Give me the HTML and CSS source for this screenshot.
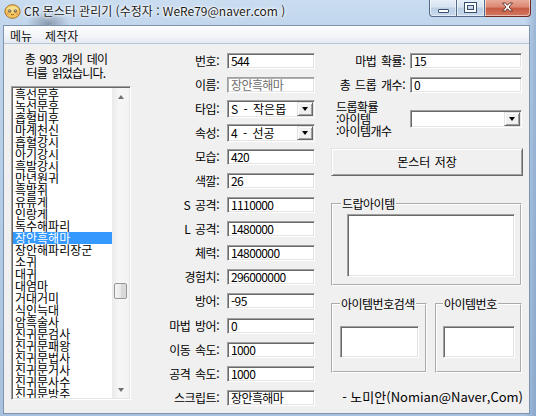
FILE: index.html
```html
<!DOCTYPE html>
<html lang="ko">
<head>
<meta charset="utf-8">
<title>CR 몬스터 관리기</title>
<link rel="stylesheet" href="styles.css">
</head>
<body>
<div class="window">
  <div class="titlebar">
    <svg class="app-icon" viewBox="0 0 17 16" width="17" height="16">
      <ellipse cx="8.5" cy="8.5" rx="7.6" ry="6.8" fill="#f2c65a" stroke="#a8742a" stroke-width="1"/>
      <ellipse cx="8.5" cy="6.5" rx="5.5" ry="3.2" fill="#f8e08e"/>
      <circle cx="5.6" cy="8" r="1.4" fill="#fff" stroke="#5a3a1a" stroke-width="0.7"/>
      <circle cx="11.4" cy="8" r="1.4" fill="#fff" stroke="#5a3a1a" stroke-width="0.7"/>
      <circle cx="5.8" cy="8.2" r="0.6" fill="#2a1a0a"/>
      <circle cx="11.2" cy="8.2" r="0.6" fill="#2a1a0a"/>
      <ellipse cx="3.6" cy="11" rx="1.3" ry="0.8" fill="#e98a6a"/>
      <ellipse cx="13.4" cy="11" rx="1.3" ry="0.8" fill="#e98a6a"/>
      <path d="M7 11.3 Q8.5 12.6 10 11.3" fill="none" stroke="#7a4a1a" stroke-width="0.8"/>
    </svg>
    <span class="title">CR 몬스터 관리기 (수정자 : WeRe79@naver.com )</span>
    <div class="caption">
      <div class="cbtn cmin"><span class="min-glyph"></span></div>
      <div class="cbtn cmax"><span class="max-glyph"></span></div>
      <div class="cbtn cclose">
        <svg viewBox="0 0 13 10" width="13" height="10">
          <path d="M1.5 1 L4.5 1 L6.5 3.3 L8.5 1 L11.5 1 L8 5 L11.5 9 L8.5 9 L6.5 6.7 L4.5 9 L1.5 9 L5 5 Z" fill="#fff" stroke="#5a2a22" stroke-width="0.9" stroke-linejoin="round"/>
        </svg>
      </div>
    </div>
  </div>

  <div class="client">
    <div class="menubar">
      <span class="menu-item">메뉴</span>
      <span class="menu-item">제작자</span>
    </div>

    <div class="content">
      <div class="left">
        <div class="count">총 903 개의 데이<br>터를 읽었습니다.</div>
        <div class="listbox">
          <ul class="items">
            <li>흑선문후</li>
            <li>녹선문후</li>
            <li>흡혈비후</li>
            <li>마계천신</li>
            <li>흡혈강시</li>
            <li>아기강시</li>
            <li>흑발강시</li>
            <li>만년원귀</li>
            <li>흑발쥐</li>
            <li>유류게</li>
            <li>인랑게</li>
            <li>독수해파리</li>
            <li class="sel">장안흑해마</li>
            <li>장안해파리장군</li>
            <li>소귀</li>
            <li>대귀</li>
            <li>대염마</li>
            <li>거대거미</li>
            <li>식인늑대</li>
            <li>암흑술사</li>
            <li>진귀문검사</li>
            <li>진귀문패왕</li>
            <li>진귀문법사</li>
            <li>진귀문거사</li>
            <li>진귀문사수</li>
            <li>진귀문방주</li>
          </ul>
          <div class="vscroll">
            <div class="arrow"><span class="tri-up"></span></div>
            <div class="track"><div class="thumb"></div></div>
            <div class="arrow"><span class="tri-down"></span></div>
          </div>
        </div>
      </div>

      <div class="mid">
        <span class="lbl">번호:</span><div class="tb">544</div>
        <span class="lbl">이름:</span><div class="tb ro">장안흑해마</div>
        <span class="lbl">타입:</span><div class="combo"><span class="val">S - 작은몹</span><span class="dd"><span class="tri-down black"></span></span></div>
        <span class="lbl">속성:</span><div class="combo"><span class="val">4 - 선공</span><span class="dd"><span class="tri-down black"></span></span></div>
        <span class="lbl">모습:</span><div class="tb">420</div>
        <span class="lbl">색깔:</span><div class="tb">26</div>
        <span class="lbl">S 공격:</span><div class="tb">1110000</div>
        <span class="lbl">L 공격:</span><div class="tb">1480000</div>
        <span class="lbl">체력:</span><div class="tb">14800000</div>
        <span class="lbl">경험치:</span><div class="tb">296000000</div>
        <span class="lbl">방어:</span><div class="tb">-95</div>
        <span class="lbl">마법 방어:</span><div class="tb">0</div>
        <span class="lbl">이동 속도:</span><div class="tb">1000</div>
        <span class="lbl">공격 속도:</span><div class="tb">1000</div>
        <span class="lbl">스크립트:</span><div class="tb">장안흑해마</div>
      </div>

      <div class="right">
        <div class="rgrid">
          <span class="lbl">마법 확률:</span><div class="tb">15</div>
          <span class="lbl">총 드롭 개수:</span><div class="tb">0</div>
        </div>
        <div class="droprow">
          <div class="droplbl">드롭확률<br>:아이템<br>:아이템개수</div>
          <div class="combo wide"><span class="val"></span><span class="dd"><span class="tri-down black"></span></span></div>
        </div>
        <div class="savebtn">몬스터 저장</div>
        <fieldset class="group drop">
          <legend>드랍아이템</legend>
          <div class="area drop-area"></div>
        </fieldset>
        <div class="grouprow">
          <fieldset class="group search">
            <legend>아이템번호검색</legend>
            <div class="area small-area"></div>
          </fieldset>
          <fieldset class="group itemno">
            <legend>아이템번호</legend>
            <div class="area small-area"></div>
          </fieldset>
        </div>
        <div class="footer">- 노미안(Nomian@Naver,Com)</div>
      </div>
    </div>
  </div>
</div>
</body>
</html>
```

FILE: styles.css
```css
html, body {
  margin: 0;
  padding: 0;
}

body {
  width: 536px;
  height: 416px;
  overflow: hidden;
  font-family: "Liberation Sans", "Noto Sans CJK KR", sans-serif;
  font-size: 12px;
  color: #000;
  background:
    radial-gradient(ellipse 22px 14px at 48px 24px, rgba(70, 80, 95, 0.45), rgba(70, 80, 95, 0) 100%),
    linear-gradient(90deg, rgba(255,255,255,0) 0, rgba(255,255,255,0) 525px, rgba(80,120,170,0.35) 536px),
    linear-gradient(180deg, #c9dcf0 0, #c0d5ec 30px, #b4cce6 200px, #a7c1de 416px);
}

.window {
  display: flex;
  flex-direction: column;
  height: 416px;
}

/* ---------- title bar ---------- */
.titlebar {
  height: 25px;
  flex: none;
  display: flex;
  align-items: flex-start;
}

.app-icon {
  margin: 3px 0 0 4px;
  flex: none;
}

.title {
  margin: 2px 0 0 3px;
  line-height: 17px;
  font-family: "Noto Sans CJK KR", "Liberation Sans", sans-serif;
  font-size: 12px;
  color: #1c1c1c;
  white-space: nowrap;
  text-shadow: 0 0 5px #fff, 0 0 3px #fff, 0 0 2px #fff;
}

.caption {
  margin-left: auto;
  margin-right: 5px;
  display: flex;
  flex: none;
}

.cbtn {
  height: 17px;
  box-sizing: border-box;
  border: 1px solid #536b8a;
  border-top: none;
  display: flex;
  align-items: center;
  justify-content: center;
  box-shadow: inset 1px 0 rgba(255,255,255,0.6), inset -1px -1px rgba(255,255,255,0.5);
}

.cmin {
  width: 28px;
  border-bottom-left-radius: 4px;
  background: linear-gradient(180deg, #e6eef8 0, #d6e2f0 45%, #bccfe5 50%, #c8d9ec 100%);
}

.cmax {
  width: 28px;
  border-left: none;
  background: linear-gradient(180deg, #e6eef8 0, #d6e2f0 45%, #bccfe5 50%, #c8d9ec 100%);
}

.cclose {
  width: 46px;
  border-left: none;
  border-bottom-right-radius: 4px;
  border-color: #6e2a20;
  background: linear-gradient(180deg, #e9a999 0, #d98772 45%, #c75a42 50%, #d27760 100%);
}

.min-glyph {
  width: 9px;
  height: 2px;
  margin-top: 6px;
  background: #fff;
  border: 1px solid #39506c;
  border-radius: 1px;
}

.max-glyph {
  width: 7px;
  height: 5px;
  margin-top: -2px;
  border: 2px solid #fff;
  border-top-width: 2px;
  box-shadow: 0 0 0 1px #39506c, inset 0 0 0 1px #39506c;
}

.cclose svg {
  margin-top: -2px;
}

/* ---------- client ---------- */
.client {
  flex: 1;
  margin: 0 6px 2px 3px;
  border: 1px solid #7d93ae;
  background: #f0f0f0;
  display: flex;
  flex-direction: column;
  font-family: "Noto Sans CJK KR", "Liberation Sans", sans-serif;
}

.menubar {
  height: 17px;
  flex: none;
  display: flex;
  gap: 13px;
  padding-left: 6px;
  border-bottom: 1px solid #b8c6d8;
  background: linear-gradient(180deg, #fdfdfe 0, #f2f5f9 60%, #e6ebf2 100%);
}

.menu-item {
  line-height: 19px;
  font-size: 12px;
  color: #101010;
}

.content {
  flex: 1;
  display: flex;
}

/* ---------- left ---------- */
.left {
  margin-left: 7px;
  width: 120px;
  flex: none;
  display: flex;
  flex-direction: column;
}

.count {
  margin-top: 8px;
  padding-right: 10px;
  line-height: 14px;
  text-align: center;
  letter-spacing: -0.8px;
  word-spacing: 2px;
  white-space: nowrap;
}

.listbox {
  margin-top: 6px;
  height: 314px;
  box-sizing: border-box;
  border: 1px solid;
  border-color: #a0a0a0 #fff #fff #a0a0a0;
  box-shadow: inset 1px 1px #696969, inset -1px -1px #e3e3e3;
  padding: 1px;
  background: #fff;
  display: flex;
}

.items {
  flex: 1;
  margin: 0;
  padding: 0;
  list-style: none;
  overflow: hidden;
  font-size: 12px;
  line-height: 12px;
}

.items li {
  height: 12px;
  padding-left: 2px;
  white-space: nowrap;
}

.items li.sel {
  background: #3399ff;
  color: #fff;
}

.vscroll {
  width: 17px;
  flex: none;
  display: flex;
  flex-direction: column;
  background: linear-gradient(90deg, #eaeaea 0, #f6f6f6 40%, #f3f3f3 100%);
}

.arrow {
  height: 17px;
  flex: none;
  display: flex;
  align-items: center;
  justify-content: center;
}

.tri-up {
  width: 0;
  height: 0;
  border-left: 3.5px solid transparent;
  border-right: 3.5px solid transparent;
  border-bottom: 4px solid #707070;
}

.tri-down {
  width: 0;
  height: 0;
  border-left: 3.5px solid transparent;
  border-right: 3.5px solid transparent;
  border-top: 4px solid #707070;
}

.tri-down.black {
  border-top-color: #000;
}

.track {
  flex: 1;
}

.thumb {
  margin: 178px 2px 0;
  height: 16px;
  box-sizing: border-box;
  border: 1px solid #979797;
  border-radius: 2px;
  background: linear-gradient(90deg, #f4f4f4 0, #e9e9e9 50%, #d9d9d9 51%, #dadada 100%);
}

/* ---------- middle form ---------- */
.mid {
  width: 184px;
  flex: none;
  display: grid;
  grid-template-columns: 1fr 88px;
  column-gap: 6px;
  grid-auto-rows: 24.1px;
  align-items: center;
  align-content: start;
  padding-top: 4.5px;
}

.lbl {
  text-align: right;
  white-space: nowrap;
  line-height: 14px;
  letter-spacing: -0.5px;
  word-spacing: 2px;
  padding-right: 2px;
}

.tb {
  height: 16px;
  box-sizing: border-box;
  border: 1px solid;
  border-color: #a0a0a0 #fff #fff #a0a0a0;
  box-shadow: inset 1px 1px #696969, inset -1px -1px #e3e3e3;
  background: #fff;
  padding: 0 3px;
  line-height: 14px;
  letter-spacing: -0.6px;
  white-space: nowrap;
  overflow: hidden;
}

.tb.ro {
  color: #6d6d6d;
  box-shadow: inset 1px 1px #b0b0b0, inset -1px -1px #e3e3e3;
}

.combo {
  height: 18px;
  box-sizing: border-box;
  border: 1px solid;
  border-color: #a0a0a0 #fff #fff #a0a0a0;
  box-shadow: inset 1px 1px #696969, inset -1px -1px #e3e3e3;
  background: #fff;
  padding: 1px;
  display: flex;
}

.combo .val {
  flex: 1;
  padding-left: 2px;
  line-height: 14px;
  white-space: nowrap;
  overflow: hidden;
  word-spacing: 2px;
}

.combo .dd {
  width: 16px;
  flex: none;
  box-sizing: border-box;
  border: 1px solid;
  border-color: #e3e3e3 #696969 #696969 #e3e3e3;
  box-shadow: inset 1px 1px #fff, inset -1px -1px #a0a0a0;
  background: #f0f0f0;
  display: flex;
  align-items: center;
  justify-content: center;
}

/* ---------- right column ---------- */
.right {
  margin-left: 7px;
  width: 201px;
  flex: none;
  display: flex;
  flex-direction: column;
  padding-top: 4.5px;
}

.rgrid {
  display: grid;
  grid-template-columns: 1fr 112px;
  column-gap: 3px;
  grid-auto-rows: 24.1px;
  align-items: center;
  margin-right: 1px;
}

.droprow {
  margin-top: 4.3px;
  display: flex;
  align-items: center;
}

.droplbl {
  padding-left: 14px;
  line-height: 12px;
  letter-spacing: -0.5px;
  white-space: nowrap;
}

.combo.wide {
  width: 112px;
  margin-left: auto;
  margin-right: 1px;
}

.savebtn {
  margin: 11px 0 0 9px;
  height: 28px;
  box-sizing: border-box;
  border: 1px solid;
  border-color: #e3e3e3 #696969 #696969 #e3e3e3;
  box-shadow: inset 1px 1px #fff, inset -1px -1px #a0a0a0;
  background: #f0f0f0;
  display: flex;
  align-items: center;
  justify-content: center;
  font-size: 12px;
  word-spacing: 1px;
}

.group {
  margin: 0;
  border: 2px groove #fff;
  min-width: 0;
}

.group legend {
  padding: 0 1px;
  line-height: 14px;
  letter-spacing: -0.5px;
  white-space: nowrap;
}

.drop {
  margin: 21px 1px 0 9px;
  padding: 3px 5px 7px 14px;
}

.drop legend {
  margin-left: -6px;
}

.area {
  box-sizing: border-box;
  border: 1px solid;
  border-color: #a0a0a0 #fff #fff #a0a0a0;
  box-shadow: inset 1px 1px #696969, inset -1px -1px #e3e3e3;
  background: #fff;
}

.drop-area {
  height: 63px;
}

.grouprow {
  margin: 11px 1px 0 9px;
  display: flex;
  gap: 8px;
}

.search {
  width: 96px;
  box-sizing: border-box;
  padding: 15px 6px 13px 7px;
}

.itemno {
  width: 87px;
  box-sizing: border-box;
  padding: 15px 5px 13px 6px;
}

.small-area {
  height: 32px;
}

.footer {
  margin-top: 17px;
  line-height: 14px;
  text-align: right;
  font-size: 13px;
  white-space: nowrap;
}
```
